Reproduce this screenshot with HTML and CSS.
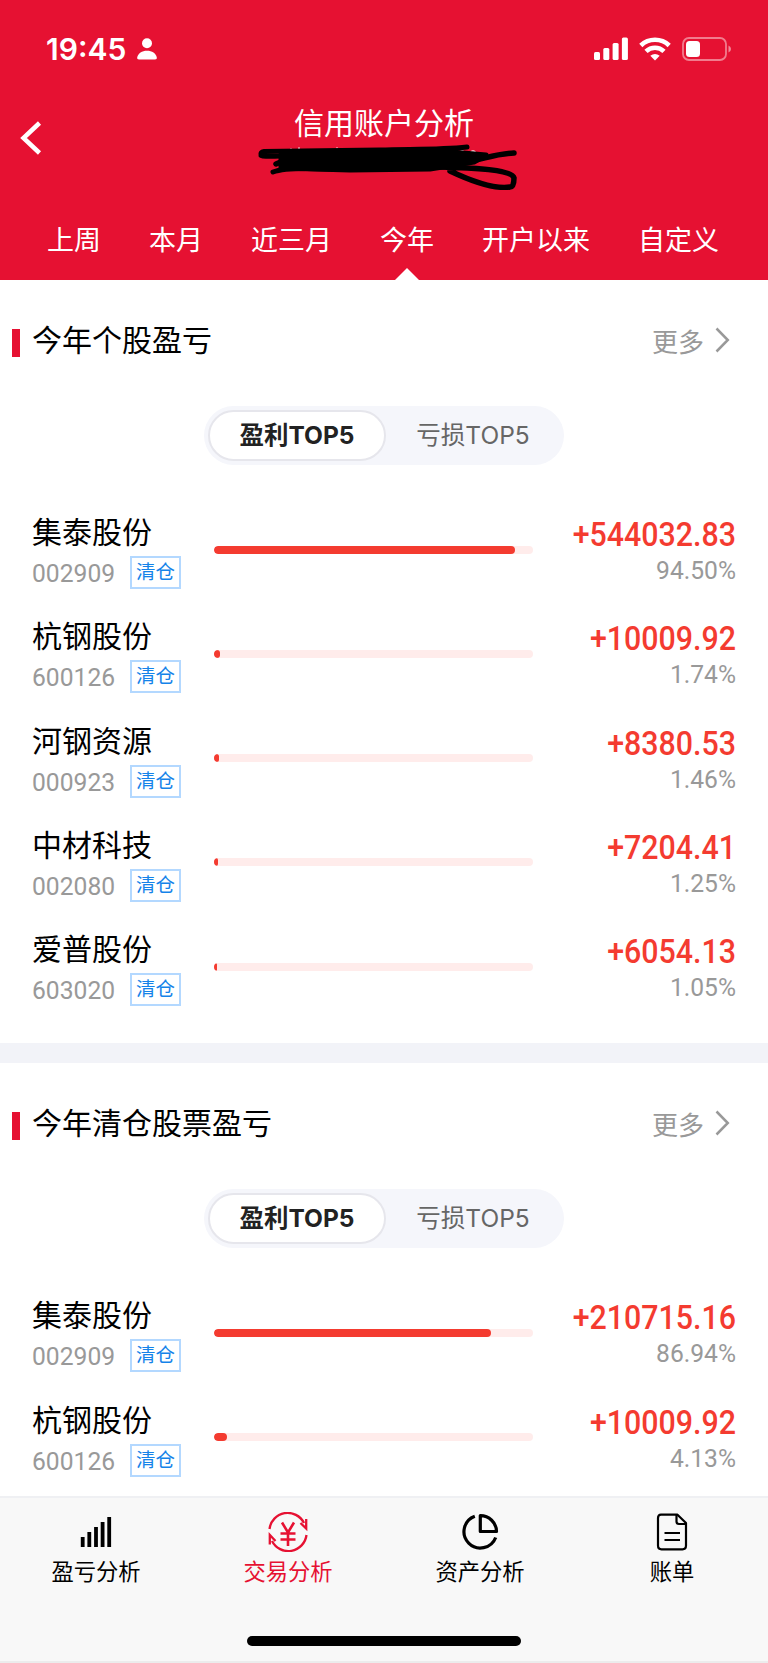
FILE: index.html
```html
<!DOCTYPE html>
<html lang="zh-CN">

<head>
    <meta charset="UTF-8">
    <meta name="viewport" content="width=device-width, initial-scale=1.0">
    <title>信用账户分析</title>
    <link rel="stylesheet" href="styles.css">
</head>

<body>
    <header class="header">
        <div class="status">
            <span class="time">19:45</span>
            <svg class="person" width="20" height="22" viewBox="0 0 20 22" fill="#fff">
                <circle cx="10" cy="5.2" r="5" />
                <path d="M2 21.5C.6 21.5 0 20.800 .2 19.500 1 15.500 5 12.800 10 12.800s9 2.700 9.800 6.700c.2 1.300-.4 2-1.800 2z" />
            </svg>
            <div class="status-icons">
                <svg width="34" height="24" viewBox="0 0 34 24" fill="#fff">
                    <rect x="0" y="15" width="6" height="8" rx="1.500" />
                    <rect x="9.300" y="11" width="6" height="12" rx="1.500" />
                    <rect x="18.600" y="6" width="6" height="17" rx="1.500" />
                    <rect x="27.900" y="0.500" width="6" height="22.500" rx="1.500" />
                </svg>
                <svg width="32" height="24" viewBox="0 0 32 24" fill="none" stroke="#fff" stroke-width="4.600">
                    <path d="M1.800 8.500A20.500 20.500 0 0 1 30.200 8.500" />
                    <path d="M7 14.300A13 13 0 0 1 25 14.300" />
                    <path d="M16 23.500L11.300 18.800Q16 15.200 20.700 18.800Z" fill="#fff" stroke="none" />
                </svg>
                <svg width="50" height="24" viewBox="0 0 50 24">
                    <rect x="1" y="1" width="43" height="22" rx="6" fill="none" stroke="#fff" stroke-opacity=".45" stroke-width="1.800" />
                    <rect x="4" y="4" width="14" height="16" rx="3.500" fill="#fff" />
                    <path d="M46.500 8.500Q49 9.500 49 12T46.500 15.500Z" fill="#fff" fill-opacity=".5" />
                </svg>
            </div>
        </div>
        <div class="title-row">
            <svg class="back" width="22" height="36" viewBox="0 0 22 36" fill="none" stroke="#fff" stroke-width="4.500">
                <path d="M19.500 3L3.500 18 19.500 33" />
            </svg>
            <h1 class="title">信用账户分析</h1>
            <svg class="scribble" width="270" height="50" viewBox="255 140 270 50" fill="none" stroke="#000" stroke-linecap="round" stroke-linejoin="round">
                <path d="M291 149v3M299 148v3M321 150h3M337 148v3M459 154q1-4 4-3M470 153q3-4 6 0" stroke="#fff" stroke-width="1.500" />
                <path d="M281 154C320 150 400 154 440 151L486 155 474 162 430 169 350 170 281 168Z" fill="#000" stroke-width="5" />
                <path d="M467 147C440 150 410 149 380 150L264 151.500Q260 152 261 155.500 262 157 280 156M273 172Q285 167 330 169" stroke-width="5" />
                <path d="M514 153C490 154 480 162 450 164M440 167C480 168 512 170 514 178Q514 187 510 187 490 190 450 171M276 164L290 158" stroke-width="5.500" />
            </svg>
        </div>
        <nav class="tabs">
            <span>上周</span>
            <span>本月</span>
            <span>近三月</span>
            <span class="active">今年</span>
            <span>开户以来</span>
            <span>自定义</span>
        </nav>
    </header>
    <main class="content">
        <section class="card">
            <div class="card-head">
                <h2>今年个股盈亏</h2>
                <span class="more">更多</span>
                <svg width="15" height="26" viewBox="0 0 15 26" fill="none" stroke="#999" stroke-width="2.500">
                    <path d="M1.500 1.500L12.800 13 1.500 24.500" />
                </svg>
            </div>
            <div class="switch">
                <span class="on">盈利TOP5</span>
                <span>亏损TOP5</span>
            </div>
            <div class="row">
                <div class="stock">
                    <div class="name">集泰股份</div>
                    <div class="sub"><span class="code">002909</span><span class="tag">清仓</span></div>
                </div>
                <div class="bar"><div class="fill" style="width: 94.5%"></div></div>
                <div class="nums"><div class="value">+544032.83</div><div class="percent">94.50%</div></div>
            </div>
            <div class="row">
                <div class="stock">
                    <div class="name">杭钢股份</div>
                    <div class="sub"><span class="code">600126</span><span class="tag">清仓</span></div>
                </div>
                <div class="bar"><div class="fill" style="width: 1.74%"></div></div>
                <div class="nums"><div class="value">+10009.92</div><div class="percent">1.74%</div></div>
            </div>
            <div class="row">
                <div class="stock">
                    <div class="name">河钢资源</div>
                    <div class="sub"><span class="code">000923</span><span class="tag">清仓</span></div>
                </div>
                <div class="bar"><div class="fill" style="width: 1.46%"></div></div>
                <div class="nums"><div class="value">+8380.53</div><div class="percent">1.46%</div></div>
            </div>
            <div class="row">
                <div class="stock">
                    <div class="name">中材科技</div>
                    <div class="sub"><span class="code">002080</span><span class="tag">清仓</span></div>
                </div>
                <div class="bar"><div class="fill" style="width: 1.25%"></div></div>
                <div class="nums"><div class="value">+7204.41</div><div class="percent">1.25%</div></div>
            </div>
            <div class="row">
                <div class="stock">
                    <div class="name">爱普股份</div>
                    <div class="sub"><span class="code">603020</span><span class="tag">清仓</span></div>
                </div>
                <div class="bar"><div class="fill" style="width: 1.05%"></div></div>
                <div class="nums"><div class="value">+6054.13</div><div class="percent">1.05%</div></div>
            </div>
        </section>
        <section class="card">
            <div class="card-head">
                <h2>今年清仓股票盈亏</h2>
                <span class="more">更多</span>
                <svg width="15" height="26" viewBox="0 0 15 26" fill="none" stroke="#999" stroke-width="2.500">
                    <path d="M1.500 1.500L12.800 13 1.500 24.500" />
                </svg>
            </div>
            <div class="switch">
                <span class="on">盈利TOP5</span>
                <span>亏损TOP5</span>
            </div>
            <div class="row">
                <div class="stock">
                    <div class="name">集泰股份</div>
                    <div class="sub"><span class="code">002909</span><span class="tag">清仓</span></div>
                </div>
                <div class="bar"><div class="fill" style="width: 86.94%"></div></div>
                <div class="nums"><div class="value">+210715.16</div><div class="percent">86.94%</div></div>
            </div>
            <div class="row">
                <div class="stock">
                    <div class="name">杭钢股份</div>
                    <div class="sub"><span class="code">600126</span><span class="tag">清仓</span></div>
                </div>
                <div class="bar"><div class="fill" style="width: 4.13%"></div></div>
                <div class="nums"><div class="value">+10009.92</div><div class="percent">4.13%</div></div>
            </div>
        </section>
    </main>
    <footer class="footer">
        <div class="menu">
            <div class="menu-item">
                <svg width="40" height="40" viewBox="0 0 40 40">
                    <path d="M6.700 35V25M13.300 35V20M20 35V15M26.600 35V10M33.200 35V5" stroke="#000" stroke-width="3.800" />
                </svg>
                <span>盈亏分析</span>
            </div>
            <div class="menu-item current">
                <svg width="40" height="40" viewBox="0 0 40 40" fill="none" stroke="#e61132" stroke-width="2.300">
                    <path d="M1.500 17A18.300 18.300 0 0 1 36 11M38.500 23A18.300 18.300 0 0 1 4 29" />
                    <path d="M38.200 7V16.500L32.500 11M1.800 32.500V23L7.500 29" />
                    <path d="M14 10.500L20 20.500 26 10.500M20 20.500V34M12.500 21.500H27.500M12.500 27.500H27.500" stroke-width="2.600" />
                </svg>
                <span>交易分析</span>
            </div>
            <div class="menu-item">
                <svg width="40" height="40" viewBox="0 0 40 40" fill="none" stroke="#000" stroke-width="3.200">
                    <path d="M14.800 4.200A16.400 16.400 0 1 0 35.700 25.500" />
                    <path d="M20.300 3.600V19.500H36.500A16.200 16.200 0 0 0 20.300 3.600Z" stroke-linejoin="round" />
                </svg>
                <span>资产分析</span>
            </div>
            <div class="menu-item">
                <svg width="40" height="40" viewBox="0 0 40 40" fill="none" stroke="#000" stroke-width="2.200" stroke-linejoin="round">
                    <path d="M9 2.700H25.500L34 11V33.500Q34 37.300 30.500 37.300H9.500Q6 37.300 6 33.500V6Q6 2.700 9 2.700Z" />
                    <path d="M24.500 3V9.500Q24.500 12 27 12H34M12.500 21H28M12.500 28H28" />
                </svg>
                <span>账单</span>
            </div>
        </div>
        <div class="home-bar"></div>
    </footer>
</body>

</html>
```
FILE: styles.css
```css
* {
    box-sizing: border-box;
}

body {
    display: flex;
    flex-direction: column;
    height: 1663px;
    margin: 0;
    overflow: hidden;
    background-color: #fff;
    color: #000;
    font-family: Inter, "Noto Sans CJK SC", sans-serif;
}

h1,
h2 {
    margin: 0;
    font-weight: normal;
}

svg {
    display: block;
    flex-shrink: 0;
}

.header {
    height: 280px;
    flex-shrink: 0;
    background-color: #e61132;
    color: #fff;
}

.status {
    display: flex;
    align-items: center;
    height: 98px;
    padding: 0 36px 0 46px;
}

.time {
    width: 91px;
    font-size: 30px;
    font-weight: 600;
}

.status-icons {
    display: flex;
    gap: 11px;
    margin-left: auto;
}

.title-row {
    position: relative;
    height: 104px;
    padding-top: 3px;
}

.back {
    position: absolute;
    left: 20px;
    top: 22px;
}

.title {
    font-size: 30px;
    line-height: 44px;
    text-align: center;
}

.scribble {
    position: absolute;
    left: 255px;
    top: 42px;
}

.tabs {
    display: flex;
    gap: 48px;
    height: 78px;
    padding-left: 47px;
    font-size: 27px;
    line-height: 78px;
}

.tabs .active {
    position: relative;
}

.tabs .active::after {
    content: "";
    position: absolute;
    left: 15px;
    bottom: 0;
    border: 12px solid transparent;
    border-top: 0;
    border-bottom-color: #fff;
}

.content {
    flex: 1;
    min-height: 0;
    overflow: hidden;
}

.card {
    padding: 38px 32px 16.800px;
    border-bottom: 20px solid #f2f3f8;
}

.card:last-child {
    border-bottom: none;
}

.card-head {
    display: flex;
    align-items: center;
    height: 44px;
    margin-left: -20px;
}

.card-head::before {
    content: "";
    width: 8px;
    height: 28px;
    margin: 6px 12px 0 0;
    background-color: #e61132;
}

.card-head h2 {
    font-size: 30px;
    line-height: 44px;
}

.card-head svg {
    margin: 0 6px 0 11px;
}

.more {
    margin-left: auto;
    color: #999;
    font-size: 26px;
}

.switch {
    display: flex;
    width: 360px;
    height: 59px;
    margin: 44px auto 40px;
    padding: 4px;
    border-radius: 30px;
    background-color: #f5f6fb;
    color: #666;
    font-size: 24.500px;
}

.switch span {
    flex: 1;
    line-height: 51px;
    text-align: center;
}

.switch .on {
    flex: 0 0 178px;
    border: 2px solid #e6e6ec;
    border-radius: 26px;
    background-color: #fff;
    color: #222;
    font-weight: bold;
    line-height: 47px;
}

.row {
    display: flex;
    height: 104.300px;
    padding-top: 7px;
}

.stock {
    width: 182px;
}

.name {
    font-size: 30px;
    line-height: 40px;
}

.sub {
    display: flex;
    align-items: center;
    margin-top: 4px;
}

.code,
.value,
.percent {
    font-family: Roboto, sans-serif;
}

.code {
    width: 98px;
    color: #999;
    font-size: 26.500px;
    line-height: 33px;
    white-space: nowrap;
    transform: scaleX(.93);
    transform-origin: left;
}

.tag {
    width: 51px;
    height: 33px;
    border: 2px solid #b3d8ff;
    color: #1583e9;
    font-size: 19.500px;
    line-height: 28px;
    text-align: center;
}

.bar {
    width: 319px;
    height: 8px;
    margin-top: 33.500px;
    border-radius: 4px;
    background-color: #ffeceb;
    overflow: hidden;
}

.fill {
    height: 8px;
    border-radius: 4px;
    background-color: #f43b30;
}

.nums {
    flex: 1;
    text-align: right;
}

.value {
    color: #f43b30;
    font-size: 33px;
    font-weight: 500;
    line-height: 40px;
    padding-top: 3px;
    transform: scaleX(.92);
    transform-origin: right;
}

.percent {
    color: #999;
    font-size: 26.500px;
    line-height: 30px;
    transform: scaleX(.93);
    transform-origin: right;
}

.footer {
    flex-shrink: 0;
    height: 167px;
    border-top: 2px solid #eff0f3;
    border-bottom: 2px solid #ececec;
    background-color: #f8f8f8;
}

.menu {
    display: flex;
    height: 138px;
    padding-top: 14px;
}

.menu-item {
    display: flex;
    flex: 1;
    flex-direction: column;
    align-items: center;
    font-size: 22.300px;
    line-height: 40px;
}

.current {
    color: #e61132;
}

.home-bar {
    width: 274px;
    height: 10px;
    margin: 0 auto;
    border-radius: 5px;
    background-color: #000;
}
```
